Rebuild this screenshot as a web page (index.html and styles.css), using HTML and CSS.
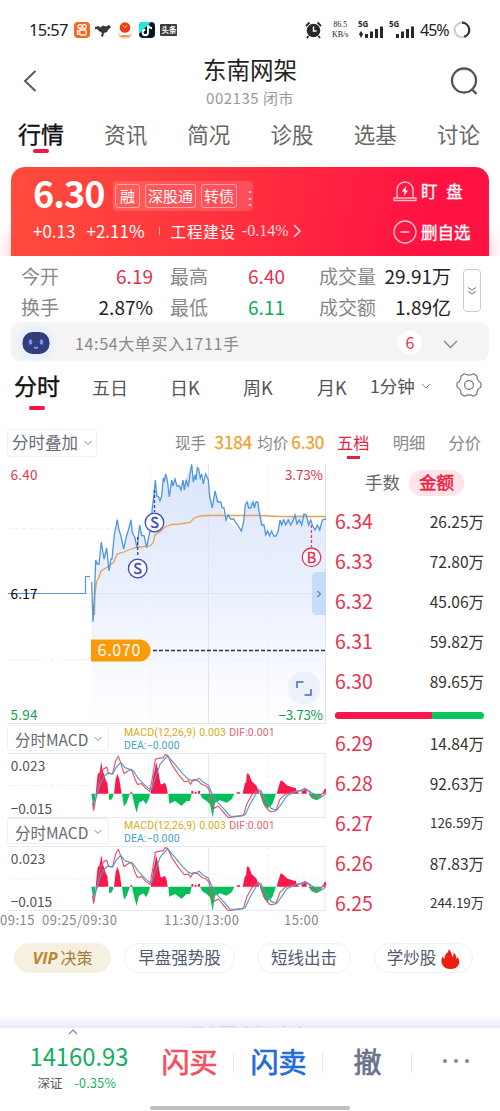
FILE: index.html
```html
<!DOCTYPE html>
<html lang="zh-CN">
<head>
    <meta charset="UTF-8">
    <meta name="viewport" content="width=device-width, initial-scale=1.0">
    <title>东南网架 002135</title>
    <link rel="stylesheet" href="styles.css">
</head>
<body>
    <div class="status-bar">
        <span class="clock">15:57</span>
        <svg class="app-icons" width="106" height="18" viewBox="0 0 106 18">
            <rect x="1" y="1" width="16" height="16" rx="4" fill="#f9661d"/>
            <g fill="none" stroke="#fff" stroke-width="1.3">
                <circle cx="7" cy="5.6" r="1.9"/><circle cx="11.4" cy="5.6" r="1.9"/>
                <rect x="6.7" y="9" width="6.4" height="5" rx="1.3"/><path d="M6.5 10.5l-2-1v4l2-1"/>
            </g>
            <path d="M22 6l4-1 1 1.500 3-2 3 1 3-1.500 2 2-3 3-1 2-3 1-1 4-2-1 1-3-3-2-2-2-2 .5z" fill="#38383b"/>
            <path d="M45 11l3 3h8l3-3-1 5-3 1.500h-6l-3-1.500z" fill="#f7cda0"/>
            <circle cx="52" cy="6.500" r="5.300" fill="#ef3b1a"/>
            <path d="M50 5l2 2 2-3M49.500 4l1 1" stroke="#ffd35d" fill="none"/>
            <path d="M48 15h8" stroke="#ee7f48" stroke-width="1.500"/>
            <rect x="66" y="1" width="16" height="16" rx="4" fill="#08191f"/>
            <path d="M66 13V5q0-4 4-4h8L66 13z" fill="#25e4df"/>
            <path d="M75 4v7.500a2.700 2.700 0 1 1-2.700-2.700M75 4q.8 3 4 3.200" stroke="#fff" stroke-width="1.900" fill="none"/>
            <rect x="87" y="3" width="17" height="12" rx="1" fill="#3b3b3c"/>
            <text class="mini" x="88.500" y="12">头条</text>
        </svg>
        <svg class="alarm" width="17" height="18" viewBox="0 0 17 18">
            <circle cx="8.500" cy="9.500" r="6.800" fill="#29292b"/>
            <path d="M1 5l3.500-3.500M16 5l-3.500-3.500M3.500 15L2 17M13.500 15l1.500 2" stroke="#29292b" stroke-width="1.800"/>
            <path d="M8.500 5.500v4.500h3" stroke="#fff" stroke-width="1.400" fill="none"/>
        </svg>
        <span class="speed">86.5<br>KB/s</span>
        <svg class="signals" width="57" height="25" viewBox="0 -3 57 25">
            <g fill="#29292b">
                <text class="net" x="0" y="7">5G</text>
                <path d="M1 14l2-3 2 3-2 4z"/>
                <path d="M7 14h3v4H7zM12 11.500h3V18h-3zM17 9h3v9h-3zM22 6.500h3V18h-3z"/>
                <text class="net" x="31" y="7">5G</text>
                <path d="M38 14h3v4h-3zM43 11.500h3V18h-3zM48 9h3v9h-3zM53 6.500h3V18h-3z"/>
            </g>
        </svg>
        <span class="battery">45%</span>
        <svg width="18" height="18" viewBox="0 0 18 18" fill="none" stroke-width="2.200">
            <circle cx="9" cy="9" r="7.300" stroke="#cfcfcf"/>
            <path d="M9 1.700a7.300 7.300 0 0 1 2.300 14.200" stroke="#333"/>
        </svg>
    </div>

    <div class="header">
        <svg width="14" height="24" viewBox="0 0 14 24"><path d="M12.500 2L2 12l10.500 10" fill="none" stroke="#555" stroke-width="1.900"/></svg>
        <div class="title">
            <h1>东南网架</h1>
            <p>002135 闭市</p>
        </div>
        <svg width="29" height="29" viewBox="0 0 29 29" fill="none" stroke="#555" stroke-width="2.300"><circle cx="14" cy="13.500" r="12"/><path d="M21.500 22l5 4.800"/></svg>
    </div>

    <div class="tabs">
        <span class="active">行情</span>
        <span>资讯</span>
        <span>简况</span>
        <span>诊股</span>
        <span>选基</span>
        <span>讨论</span>
    </div>

    <div class="quote-wrap">
        <div class="quote">
            <div class="quote-row top">
                <span class="price">6.30</span>
                <div class="tags">
                    <span>融</span><span>深股通</span><span>转债</span><i>⋮</i>
                </div>
                <div class="action">
                    <svg width="24" height="24" viewBox="0 0 24 24" fill="none" stroke="#ffc3c8" stroke-width="1.400">
                        <path d="M4 19V11a8 8 0 0 1 16 0v8M1 19h22v2.500H1z"/>
                        <path d="M13 7l-4 5.500h2.500L11 17l4-5.500h-2.500z" fill="#fff" stroke="none"/>
                    </svg>
                    <b class="watch">盯 盘</b>
                </div>
            </div>
            <div class="quote-row bottom">
                <span class="change">+0.13</span>
                <span class="change">+2.11%</span>
                <i class="bar"></i>
                <span class="sector">工程建设</span>
                <span class="sector-change">-0.14%</span>
                <svg width="9" height="16" viewBox="0 0 9 16"><path d="M1 2l6 6-6 6" fill="none" stroke="#ffd6d6" stroke-width="1.600"/></svg>
                <div class="action">
                    <svg width="24" height="24" viewBox="0 0 24 24" fill="none" stroke="#ffc3c8" stroke-width="1.300"><circle cx="12" cy="12" r="11"/><path d="M7.500 12h9" stroke-width="1.600"/></svg>
                    <b>删自选</b>
                </div>
            </div>
        </div>
    </div>

    <div class="stats">
        <div class="stat-grid">
            <label>今开</label><span class="red">6.19</span>
            <label>最高</label><span class="red">6.40</span>
            <label>成交量</label><span>29.91万</span>
            <label>换手</label><span>2.87%</span>
            <label>最低</label><span class="green">6.11</span>
            <label>成交额</label><span>1.89亿</span>
        </div>
        <button class="more"><svg width="10" height="10" viewBox="0 0 10 10" fill="none" stroke="#777"><path d="M1 1.500l4 2.500 4-2.500M1 5.500L5 8l4-2.500"/></svg></button>
    </div>

    <div class="notice">
        <svg width="40" height="38" viewBox="0 0 40 38">
            <circle cx="20" cy="19" r="18.500" fill="#e8f1fd"/>
            <rect x="6.500" y="8" width="27" height="22" rx="10" fill="#343c79"/>
            <ellipse cx="14.500" cy="18" rx="1.800" ry="2.700" fill="#659cff"/><ellipse cx="25.500" cy="18" rx="1.800" ry="2.700" fill="#659cff"/>
            <path d="M18 23q2 2 4 0" stroke="#87aaff" fill="none" stroke-width="1.300"/>
        </svg>
        <span class="notice-text">14:54大单买入1711手</span>
        <span class="count">6</span>
        <svg width="15" height="9" viewBox="0 0 15 9"><path d="M1 1l6.500 6.500L14 1" fill="none" stroke="#888" stroke-width="1.400"/></svg>
    </div>

    <div class="periods">
        <span class="active">分时</span>
        <span>五日</span>
        <span>日K</span>
        <span>周K</span>
        <span>月K</span>
        <span class="minute">1分钟<svg width="10" height="6" viewBox="0 0 10 6"><path d="M1 1l4 4 4-4" fill="none" stroke="#888"/></svg></span>
        <svg width="26" height="26" viewBox="0 0 26 26" fill="none" stroke="#777" stroke-width="1.200" stroke-linejoin="round">
            <path d="M8.500 1.800Q13 4.500 17.500 1.800L21 4Q20.500 8.500 25 11V15Q20.500 17.500 21 22L17.500 24.200Q13 21.500 8.500 24.200L5 22Q5.500 17.500 1 15V11Q5.500 8.500 5 4z"/>
            <circle cx="13" cy="13" r="4.400"/>
        </svg>
    </div>

    <div class="main">
        <div class="charts">
            <div class="overlay-row">
                <span class="select">分时叠加<svg width="8" height="6" viewBox="0 0 8 6"><path d="M.5 1L4 4.500 7.500 1" fill="none" stroke="#888"/></svg></span>
                <span class="legend">现手 <b>3184</b></span>
                <span class="legend avg">均价<b>6.30</b></span>
            </div>
            <svg class="price-chart" width="326" height="262" viewBox="0 463 326 262">
                <defs>
                    <linearGradient id="area" x1="0" y1="0" x2="0" y2="1">
                        <stop offset="0" stop-color="#dbe5fb"/>
                        <stop offset=".5" stop-color="#ebf1fd"/>
                        <stop offset="1" stop-color="#ffffff"/>
                    </linearGradient>
                </defs>
                <path d="M91.500 724V582L93 621 94.300 598 95.700 560 99 564 101.300 542 104 559 106.700 548 109 571 112 560 117.300 520 123.700 549 131 520 137 548 139.700 525 146.700 548 150.700 528 155.300 480 160 501 165.700 474 169.300 497 171.700 480 181 490 191.700 464 193.300 482 197.300 468 203.300 484 208.300 480 212.300 508 215 491 226 520 241.300 531 247 502 258 502 264 525 269.700 536 276 536 280 520 304 514 315 530 326 519V724z" fill="url(#area)"/>
                <g stroke="#dfe4ef" fill="none">
                    <path d="M208.500 464v260M325.500 464v260M8 593.500h318M8 723.500h318"/>
                    <path d="M150.500 464v260M267.500 464v260M8 528.500h318M8 659.500h318" stroke-dasharray="4 3" stroke="#edf0f6"/>
                </g>
                <path d="M8 593.500H85.500V576.500H90" fill="none" stroke="#5298dd" stroke-width="1.200"/>
                <path d="M94.500 615L95 595 96.500 582 99 577 101 571 106 568 110 565 114 562 117 554 124 552 131 549 136 547.500 150 546 153 543 155 535 161 531 165 527 172 524.500 180 524 190 522.500 194 518 200 516 208 515.500 260 515.500 280 516.500 326 516.500" fill="none" stroke="#e7a152" stroke-width="1.300"/>
                <path d="M91.700 582L93 621.700 94.300 598 95.700 560 97.300 564H99L101.300 542 102.700 551 104 559 106.700 548 109 571 111 559H112L114.300 535 117.300 519.700 119 530 120.700 535 123.700 549 126.300 536.700 128.700 529 131 519.700 132.300 533 134.700 537 137 547.700 139.700 525 141.700 535.700H144L146.700 547.700 148.700 537 150.700 528 152.300 508 153.700 497 155.300 480 156.700 496 158.700 497 160 501 161.700 496 163.300 478 164.300 481 165.700 474 167.300 480 169.300 497 171.700 480 173 486 175 479 177 486H179.300L181 490 183 480 184.300 490 186.300 480 188.300 487 190 475 191.700 464.300 193.300 482 195 475 196 480 197.300 467.700 198.700 469 200.300 478 201.700 474 203.300 484 205.700 474 208.300 480 209.700 497 212.300 508 215 491 217.700 502H220.700L222.300 508H224L226 520 228.300 515 230.700 519H233.700L236 523 238.300 526 241.300 531 243.700 522 245.300 505 247 502 248.700 508H250.700L253 502 254.300 508 256 502H257.700L259.300 513 261.700 525H264L265.700 535 267.700 531 269.700 536 271.700 531 273.700 536H276L278.300 531 280 520 281.700 525 283.700 520 285.700 525 288.300 520 290.700 525 293.300 520 295 515 297 524 299.300 520 301.700 525 304 514 306.300 515 308.700 525 310.700 520 312.700 526 315 530 317.300 525 319.700 530 322.300 520 326 519" fill="none" stroke="#4e97df" stroke-width="1.300"/>
                <path d="M137.700 537v19M154.500 490v22" stroke="#2b3faf" stroke-width="1.300" stroke-dasharray="3 2"/>
                <path d="M311.500 525v22" stroke="#ef3157" stroke-width="1.200" stroke-dasharray="3 2"/>
                <g class="mark sell"><circle cx="137.700" cy="568.500" r="9.300"/><text x="137.700" y="574">S</text></g>
                <g class="mark sell"><circle cx="154.500" cy="522.500" r="9.300"/><text x="154.500" y="528">S</text></g>
                <g class="mark buy"><circle cx="311.500" cy="557.300" r="9.300"/><text x="311.500" y="562.500">B</text></g>
                <path d="M153 650.500h173" stroke="#273449" stroke-width="1.300" stroke-dasharray="4 2"/>
                <path d="M91 639.500h48.500a11 11 0 0 1 0 22H91z" fill="#fa9c0a"/>
                <text class="level" x="97.500" y="656" textLength="43">6.070</text>
                <path d="M326 572h-9q-5 0-5 5v33q0 5 5 5h9z" fill="#c0d9f8" opacity=".85"/>
                <path d="M317.500 591l3 3-3 3" fill="none" stroke="#4d86cf" stroke-width="1.200"/>
                <circle cx="304" cy="688" r="16.500" fill="#edf1fa"/>
                <path d="M297 688v-6h6.500M311 689v6h-6.500" fill="none" stroke="#4169c8" stroke-width="1.500"/>
                <text class="axis red" x="10.500" y="480" textLength="27">6.40</text>
                <text class="axis" x="10.500" y="598.500" textLength="27">6.17</text>
                <text class="axis green" x="10.500" y="719.500" textLength="27">5.94</text>
                <text class="axis red" x="285" y="480" textLength="38">3.73%</text>
                <text class="axis green" x="278.500" y="719.500" textLength="44.500">−3.73%</text>
            </svg>

            <div class="macd">
                <div class="macd-head">
                    <span class="select">分时MACD<svg width="8" height="6" viewBox="0 0 8 6"><path d="M.5 1L4 4.500 7.500 1" fill="none" stroke="#888"/></svg></span>
                    <p><span class="yellow">MACD(12,26,9)</span> <span class="yellow">0.003</span> <span class="dif">DIF:0.001</span><br><span class="dea">DEA:−0.000</span></p>
                </div>
                <svg class="macd-chart" width="326" height="65" viewBox="0 96 978 195">
                    <g id="macd-plot">
                        <path d="M24 97h954M24 290h954M626 97v193M975 97v193" stroke="#e3e7ef" stroke-width="3" fill="none"/>
                        <path d="M450 97v193M804 97v193M24 194h954" stroke="#edf0f5" stroke-width="3" stroke-dasharray="12 9" fill="none"/>
                        <path d="M274 218L281 262 287 218zM327 218V236H334L340 225V218zM366 218L372 257 380 245 390 218zM396 218L404 255 410 275 417 245 430 238 438 250 446 235 450 218zM505 218L508 248 525 240 545 254 560 240H570L575 218zM600 218L607 232 620 240 630 250 638 290 645 245 660 238 680 245 695 235 703 218zM779 218L790 250 803 262 817 250 828 218zM925 218L935 232 950 238 963 230 965 218z" fill="#08be5b"/>
                        <path d="M287 218L293 160 299 154 304 122 308 150 312 160 318 180 322 185 325 218zM342 218L347 175 352 158 358 175 365 218zM390 218L394 211 398 218zM452 218L460 165 465 145 468 122 475 150 479 175 482 190H486L495 185 500 198 503 218zM574 218v-8h6v8zM584 218v-6h6v6zM594 218v-9h6v9zM710 218v-4h10v4zM728 218L735 185H738L741 157 747 160 755 180 770 195 778 218zM830 218L835 200 842 178 850 182 860 192 865 195 882 200H887L890 210 898 218zM905 218V210H912V205H920V218zM967 218L972 208 975 203H978V218z" fill="#fa174b"/>
                        <path d="M277 245L281 268 288 230 300 165 310 145 320 138 326 158 338 158 347 120 355 106 362 125 372 158 383 150 395 145 405 175 412 190 425 188 435 200 450 212 458 165 466 115 475 112 490 110 495 101 503 103 515 130 535 160 553 182 565 180 572 190 580 175 595 180 605 190 620 196 627 205 635 240 643 262 655 255 667 270 685 290 710 286 730 284 740 250 755 222 775 205 787 225 795 255 810 272 827 270 840 235 855 220 880 213 900 210 915 202 925 210 940 228 955 230 970 215 978 213" fill="none" stroke="#e75568" stroke-width="3.500" stroke-linejoin="round"/>
                        <path d="M281 245L290 225 300 190 312 165 325 155 337 160 348 140 362 124 375 140 390 145 400 150 415 172 430 188 445 202 455 205 468 165 480 130 490 118 503 105 525 130 545 155 565 175 580 180 598 172 607 182 625 192 635 215 647 238 670 262 690 285 710 286 735 282 750 250 770 215 782 208 795 232 813 262 830 268 845 248 860 225 885 212 905 208 920 205 935 215 955 226 965 228 978 217" fill="none" stroke="#549bc5" stroke-width="3.500" stroke-linejoin="round"/>
                    </g>
                    <text class="scale" x="32" y="149" textLength="104">0.023</text>
                    <text class="scale" x="32" y="278" textLength="124">−0.015</text>
                </svg>
            </div>

            <div class="macd">
                <div class="macd-head">
                    <span class="select">分时MACD<svg width="8" height="6" viewBox="0 0 8 6"><path d="M.5 1L4 4.500 7.500 1" fill="none" stroke="#888"/></svg></span>
                    <p><span class="yellow">MACD(12,26,9)</span> <span class="yellow">0.003</span> <span class="dif">DIF:0.001</span><br><span class="dea">DEA:−0.000</span></p>
                </div>
                <svg class="macd-chart" width="326" height="65" viewBox="0 96 978 195">
                    <use href="#macd-plot"/>
                    <text class="scale" x="32" y="149" textLength="104">0.023</text>
                    <text class="scale" x="32" y="278" textLength="124">−0.015</text>
                </svg>
            </div>

            <div class="times"><span>09:15</span><span>09:25/09:30</span><span>11:30/13:00</span><span>15:00</span></div>
        </div>

        <div class="book">
            <div class="book-tabs"><span class="active">五档</span><span>明细</span><span>分价</span></div>
            <div class="book-mode"><span>手数</span><b>金额</b></div>
            <div class="level-row"><span>6.34</span><em>26.25万</em></div>
            <div class="level-row"><span>6.33</span><em>72.80万</em></div>
            <div class="level-row"><span>6.32</span><em>45.06万</em></div>
            <div class="level-row"><span>6.31</span><em>59.82万</em></div>
            <div class="level-row"><span>6.30</span><em>89.65万</em></div>
            <div class="ratio"><i style="width: 65%"></i></div>
            <div class="level-row"><span>6.29</span><em>14.84万</em></div>
            <div class="level-row"><span>6.28</span><em>92.63万</em></div>
            <div class="level-row"><span>6.27</span><em class="long">126.59万</em></div>
            <div class="level-row"><span>6.26</span><em>87.83万</em></div>
            <div class="level-row"><span>6.25</span><em class="long">244.19万</em></div>
        </div>
    </div>

    <div class="chips">
        <span class="vip"><b>VIP</b>决策</span>
        <span class="chip-strong">早盘强势股</span>
        <span class="chip-short">短线出击</span>
        <span class="chip-learn">学炒股<svg width="19" height="20" viewBox="0 0 19 20"><path d="M7.500 0Q11 3 11 8q2-1 1.500-5 3 3 3 7 1-.5 1-2.500 2.500 4 1.500 7.500-2 5-8.500 5T1 15Q-.5 11 2 7q0 2 1.500 3Q4 5 6 4q2-1.500 1.500-4z" fill="#ee1d11"/></svg></span>
    </div>

    <div class="fold">
        <svg width="120" height="3" viewBox="0 0 120 3"><path d="M2 2h12M20 2h5M32 1.500h15M54 2h6M68 1.500h3M79 2h3M93 1.500h3M109 2h4" stroke="#d3d8e0"/></svg>
    </div>

    <div class="bottom-bar">
        <div class="index">
            <svg width="10" height="6" viewBox="0 0 10 6"><path d="M1 5l4-4 4 4" fill="none" stroke="#888" stroke-width="1.200"/></svg>
            <strong>14160.93</strong>
            <p>深证 <span>-0.35%</span></p>
        </div>
        <div class="trade"><b class="buy-btn">闪买</b></div>
        <div class="trade"><b class="sell-btn">闪卖</b></div>
        <div class="trade"><b class="cancel-btn">撤</b></div>
        <div class="dots"><i></i><i></i><i></i></div>
    </div>
    <div class="home"></div>
</body>
</html>
```

FILE: styles.css
```css
* {
    box-sizing: border-box;
}
body {
    margin: 0;
    width: 500px;
    height: 1111px;
    overflow: hidden;
    background: #fff;
    color: #222;
    font-family: "Noto Sans CJK SC", sans-serif;
    display: flex;
    flex-direction: column;
}
body > div {
    flex-shrink: 0;
}
svg {
    display: block;
    flex-shrink: 0;
}
h1, p {
    margin: 0;
    font-weight: normal;
}
i, em {
    font-style: normal;
}
.red { color: #e52f4e; fill: #d93850; }
.green { color: #14aa5b; fill: #14a055; }

/* status bar */
.status-bar {
    height: 57px;
    padding: 2px 29px 0 29px;
    display: flex;
    align-items: center;
}
.clock {
    width: 45px;
    font: 16.500px/20px "Noto Sans", sans-serif;
    letter-spacing: -0.7px;
}
.mini { font-size: 7.500px; font-weight: bold; fill: #fff; }
.alarm { margin-left: 126px; }
.speed {
    width: 22px;
    margin: 0 7px 0 7px;
    font: 8px/10px "Liberation Serif", serif;
    text-align: center;
    white-space: nowrap;
}
.net { font: bold 8px "Noto Sans", sans-serif; }
.battery {
    font: 16px/20px "Noto Sans", sans-serif;
    letter-spacing: -1px;
    width: 28px;
    margin: 0 5px 0 5px;
}

/* header */
.header {
    height: 54px;
    padding: 0 21px 0 23px;
    display: flex;
    justify-content: space-between;
    align-items: center;
}
.header > svg { margin-top: -6px; }
.title {
    text-align: center;
    padding-left: 13px;
}
.title h1 {
    font-size: 23.500px;
    line-height: 28px;
    margin-top: -4px;
}
.title p {
    font-size: 15px;
    line-height: 24px;
    margin-top: 3px;
    color: #999;
    letter-spacing: 0.5px;
}

.tabs {
    height: 56px;
    padding: 6px 20px 0 18px;
    display: flex;
    justify-content: space-between;
    font-size: 21.500px;
    line-height: 34px;
    color: #666;
}
.tabs .active {
    font-size: 23px;
    line-height: 33px;
    color: #111;
    -webkit-text-stroke: 0.4px;
}
.tabs .active::after, .periods .active::after {
    content: "";
    display: block;
    width: 16px;
    height: 4px;
    margin: -1px auto 0;
    border-radius: 2px;
    background: #f2173f;
}

/* quote card */
.quote-wrap {
    height: 89px;
    padding: 0 11px;
    overflow: hidden;
}
.quote {
    height: 100px;
    padding: 2px 16px 0 22px;
    border-radius: 14px 14px 0 0;
    background: linear-gradient(100deg, #ff4c3c, #ff353e 40%, #ff1342 85%);
    box-shadow: 0 66px 18px 0 rgba(255, 40, 60, 0.35);
    color: #fff;
}
.quote-row {
    display: flex;
    align-items: center;
}
.top { height: 45px; }
.bottom { height: 34px; }
.price {
    width: 80px;
    font: bold 36px/40px "Noto Sans CJK SC", sans-serif;
    letter-spacing: -1px;
}
.tags {
    display: flex;
    align-items: center;
    gap: 5px;
    height: 30px;
    width: 140px;
    padding-left: 2px;
    margin-top: 8px;
    border-radius: 4px;
    background: rgba(255, 255, 255, 0.15);
}
.tags span {
    padding: 0 2px;
    border: 1px solid rgba(255, 255, 255, 0.45);
    border-radius: 3px;
    font-size: 15px;
    line-height: 22px;
}
.tags span:first-child { padding: 0 4px; }
.tags i { width: 6px; margin-left: -1px; opacity: 0.7; font-size: 18px; line-height: 20px; }
.action {
    margin-left: auto;
    width: 80px;
    display: flex;
    align-items: center;
    gap: 4px;
}
.action b {
    font-size: 16.500px;
    line-height: 24px;
    font-weight: 400;
    white-space: nowrap;
    -webkit-text-stroke: 0.3px;
}
.action .watch { word-spacing: 5px; }
.top .action { margin-top: -2px; }
.bottom .action { margin-top: 1px; }
.change { font-size: 17px; line-height: 24px; margin-right: 11px; }
.bar { width: 1px; height: 8px; background: #ffb0aa; margin: 0 11px 0 3px; }
.sector { font: 15.500px/24px "Noto Sans CJK SC", sans-serif; letter-spacing: 0.8px; }
.sector-change { font: 16px/24px "Liberation Serif", serif; margin: 0 5px 0 6px; color: #ffdcdc; }

/* stats */
.stats {
    height: 66px;
    padding: 4px 19px 0 21px;
    display: flex;
}
.stat-grid {
    width: 430px;
    display: grid;
    grid-template-columns: 50px 82px 67px 65px 91px 75px;
    font-size: 19px;
    line-height: 31px;
}
.stat-grid label { color: #888; white-space: nowrap; }
.stat-grid span { text-align: right; }
.stat-grid label:nth-of-type(3n+2) { padding-left: 17px; }
.stat-grid label:nth-of-type(3n) { padding-left: 34px; }
.more {
    width: 18px;
    height: 43px;
    margin: 9px 0 0 12px;
    padding: 0;
    border: 1px solid #ccc;
    border-radius: 4px;
    background: #fff;
    display: flex;
    align-items: center;
    justify-content: center;
}

.notice {
    height: 39px;
    margin: 0 11px;
    padding: 2px 31px 0 5px;
    border-radius: 9px;
    background: #f4f4f4;
    display: flex;
    align-items: center;
    color: #888;
}
.notice-text { margin-left: 19px; font-size: 16px; line-height: 24px; letter-spacing: 0.65px; }
.count {
    width: 24px;
    height: 24px;
    margin: 0 21px 0 auto;
    border-radius: 50%;
    background: #fff;
    color: #e93350;
    font-size: 16px;
    line-height: 22px;
    text-align: center;
}
.count + svg { margin-top: 4px; }

.periods {
    height: 64px;
    padding: 8px 19px 0 14px;
    display: grid;
    grid-template-columns: 78px 78px 73px 74px 53px 86px 26px;
    font-size: 18px;
    line-height: 36px;
    color: #555;
}
.periods .active { font-size: 23px; width: 46px; line-height: 33px; color: #111; -webkit-text-stroke: 0.4px; }
.periods .active::after { margin-top: 4px; }
.periods .minute { display: flex; align-items: center; gap: 6px; height: 34px; font-size: 17.500px; }
.periods > svg { margin-top: 3px; }

/* charts */
.main {
    height: 505px;
    display: flex;
    gap: 8px;
}
.charts { width: 326px; }
.overlay-row {
    height: 38px;
    padding: 4px 0 0 7px;
    display: flex;
    line-height: 27px;
}
.select {
    display: flex;
    align-items: center;
    gap: 6px;
    height: 28px;
    padding: 0 4px 1px;
    border: 1px solid #f0f0f2;
    border-radius: 3px;
    font-size: 16.500px;
    color: #666b75;
    white-space: nowrap;
}
.legend { margin-left: 78px; font-size: 15.500px; line-height: 26px; color: #888; white-space: nowrap; }
.legend b { color: #eda330; font-weight: 400; font-size: 17px; margin-left: 5px; -webkit-text-stroke: 0.3px; }
.legend.avg { margin-left: 5px; }
.legend.avg b { margin-left: 3px; }
.mark circle { fill: #fff; stroke-width: 1.300; }
.mark text { font-size: 14.500px; text-anchor: middle; stroke-width: 0.4; }
.sell circle { stroke: #3449bd; }
.sell text { fill: #3449bd; stroke: #3449bd; }
.buy circle { stroke: #e42e52; }
.buy text { fill: #e42e52; stroke: #e42e52; }
.level { font-size: 16px; fill: #fff; }
.axis { font-size: 13.500px; }

.macd-head {
    height: 27px;
    padding-left: 7px;
    display: flex;
}
.macd-head .select {
    width: 102px;
    height: 26px;
    padding: 1px 0 0 7px;
    gap: 6px;
    font-size: 15.500px;
}
.macd-head p {
    margin: 1px 0 0 15px;
    font: 10.500px/13px Roboto, sans-serif;
    letter-spacing: 0.1px;
    word-spacing: 0.5px;
    white-space: nowrap;
}
.macd { height: 93px; }
.macd-chart { margin-top: 1px; }
.yellow { color: #d8aa18; }
.dif { color: #dd6572; }
.dea { color: #489cce; }
.scale { font-size: 41px; fill: #555; }
.times {
    display: grid;
    grid-template-columns: 42px 122px 120px 42px;
    height: 19px;
    font-size: 13px;
    line-height: 18px;
    color: #888;
    letter-spacing: 0.5px;
}

/* order book */
.book { width: 152px; padding-right: 2px; }
.book-tabs {
    display: flex;
    justify-content: space-between;
    height: 37px;
    padding: 4px 3px 0;
    font-size: 16.300px;
    line-height: 26px;
    color: #888;
}
.book-tabs .active { color: #e9233f; }
.book-tabs .active::after {
    content: "";
    display: block;
    width: 13px;
    height: 3px;
    margin: 1px auto 0;
    background: #df2441;
}
.book-mode {
    height: 40px;
    padding: 8px 0 0 31px;
    display: flex;
    gap: 9px;
    font-size: 17.500px;
    line-height: 24px;
    color: #666;
}
.book-mode b {
    height: 26px;
    padding: 0 10px;
    border-radius: 13px;
    background: #ffe5e9;
    color: #e9233f;
    font-weight: 400;
    -webkit-text-stroke: 0.5px;
}
.level-row {
    height: 40px;
    display: flex;
    align-items: center;
    justify-content: space-between;
    line-height: 38px;
    padding: 0 0 2px 1px;
}
.level-row span { font-size: 19.500px; color: #e73350; }
.level-row em { font-size: 15.500px; color: #333; }
.level-row .long { font-size: 13.300px; }
.ratio {
    height: 7px;
    margin: 10px 0 5px 1px;
    border-radius: 4px;
    background: #08c85c;
    overflow: hidden;
}
.ratio i { display: block; height: 7px; background: #fa174b; }

/* chips */
.chips {
    height: 85px;
    padding: 13px 27px 0 14px;
    display: flex;
    align-items: flex-start;
}
.chips span {
    height: 30px;
    border: 1px solid #edf0f6;
    border-radius: 15px;
    font-size: 16.500px;
    line-height: 27px;
    color: #515b70;
    text-align: center;
    white-space: nowrap;
}
.chips .vip {
    width: 97px;
    border-color: #f5f0df;
    background: #f5f0df;
    color: #a77b35;
    font-size: 16px;
}
.vip b { font: italic bold 16.500px "Open Sans", sans-serif; color: #b98832; margin-right: 3px; }
.chips .chip-strong { width: 111px; margin-left: 13px; }
.chips .chip-short { width: 94px; margin-left: 22px; }
.chips .chip-learn { width: 99px; margin-left: 23px; display: flex; justify-content: center; gap: 5px; }
.chip-learn svg { margin-top: 5px; }

.fold {
    height: 13px;
    padding: 10px 0 0 189px;
    background: linear-gradient(#fff, #e6ecf6);
}

/* bottom bar */
.bottom-bar {
    height: 77px;
    display: grid;
    grid-template-columns: 145px 89px 89px 89px 88px;
}
.index { padding: 1px 0 0 13px; text-align: center; }
.index svg { margin: 0 0 0 55px; }
.index strong {
    display: block;
    color: #16ad64;
    font-size: 23.800px;
    font-weight: 400;
    line-height: 41px;
}
.index p { font-size: 12.500px; line-height: 14px; color: #555; padding-right: 4px; }
.index p span { margin-left: 9px; color: #16ad64; letter-spacing: 0.3px; }
.trade {
    height: 68px;
    font-size: 28px;
    line-height: 67px;
    text-align: center;
    background: linear-gradient(#e4e6ea, #e4e6ea) no-repeat right 0 top 25px / 1px 20px;
}
.trade b {
    display: inline-block;
    font-weight: 400;
    -webkit-text-stroke: 0.7px;
}
.buy-btn { color: #f34f5e; }
.sell-btn { color: #236bd9; }
.cancel-btn { color: #69728a; }
.dots { display: flex; gap: 7px; padding: 31px 0 0 31px; }
.dots i { width: 4px; height: 4px; border-radius: 50%; background: #888; }
.home { width: 200px; height: 4px; margin: 1px auto 0; border-radius: 2px; background: #bfbfbf; }
```
